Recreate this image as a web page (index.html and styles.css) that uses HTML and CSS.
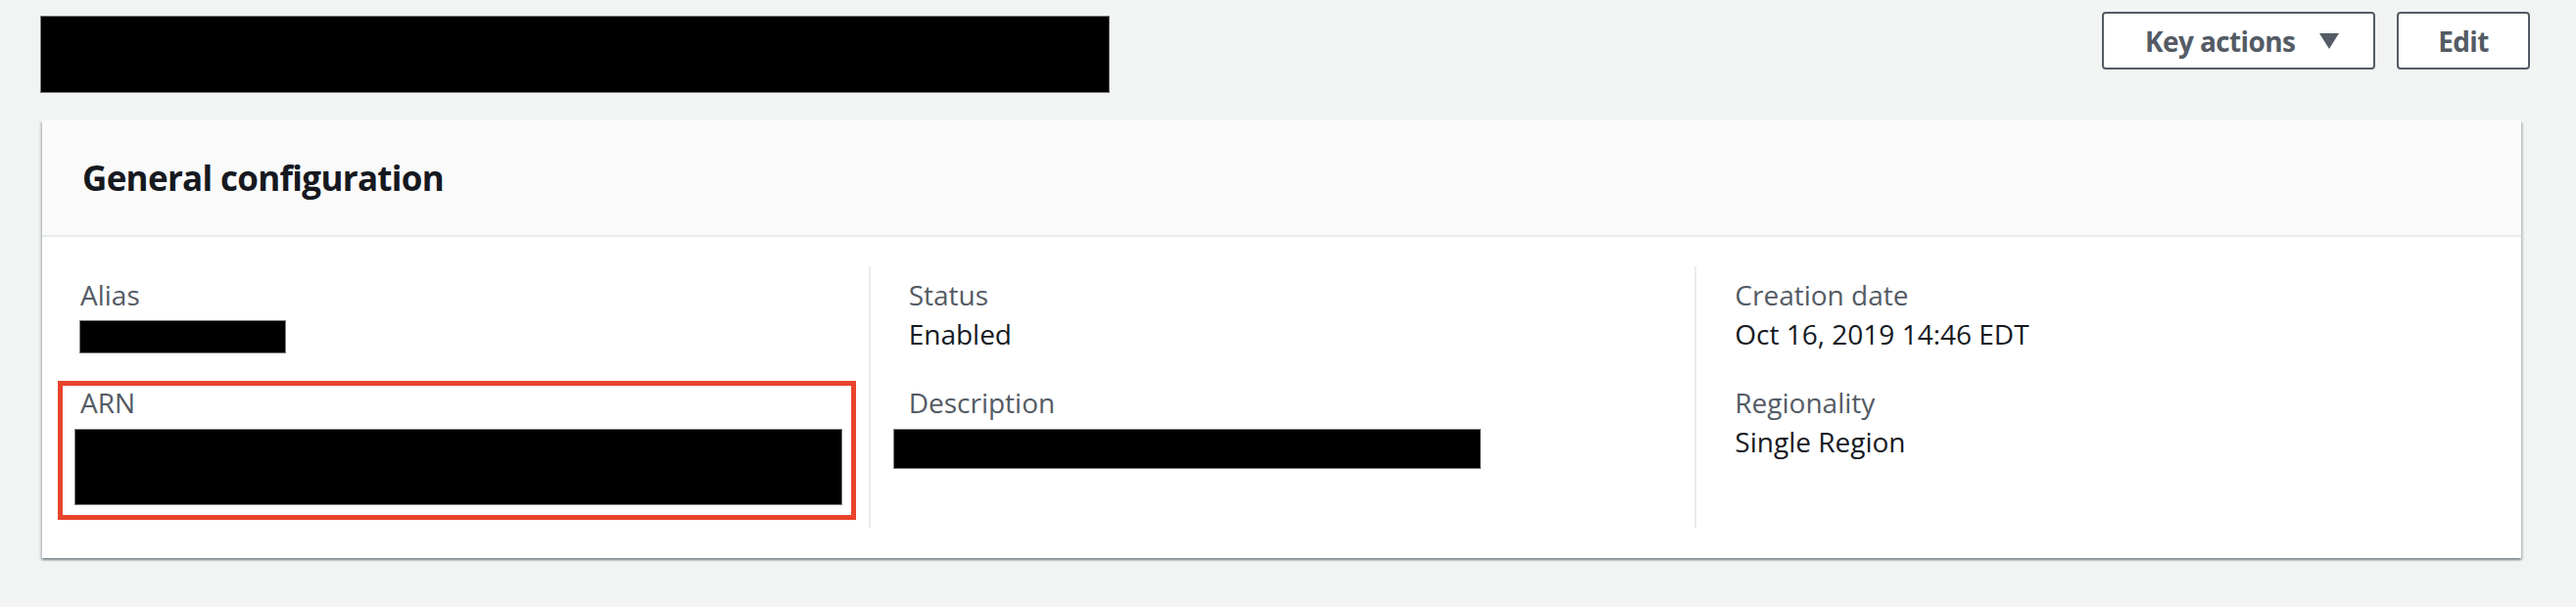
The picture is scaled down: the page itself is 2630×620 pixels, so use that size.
FILE: index.html
```html
<!DOCTYPE html>
<html lang="en">
<head>
<meta charset="utf-8">
<title>General configuration</title>
<link rel="stylesheet" href="styles.css">
</head>
<body>
<div class="page">
  <div class="top-row">
    <div class="redact redact-title"></div>
    <div class="actions">
      <button class="btn btn-dropdown" type="button">
        <span>Key actions</span>
        <svg class="caret" width="20" height="16" viewBox="0 0 20 16" aria-hidden="true"><path d="M0 0 H20 L10 16 Z" fill="#545b64"/></svg>
      </button>
      <button class="btn" type="button">Edit</button>
    </div>
  </div>

  <section class="card">
    <header class="card-header">
      <h2 class="card-title">General configuration</h2>
    </header>
    <div class="card-body">
      <div class="col">
        <div class="kv">
          <div class="kv-label">Alias</div>
          <div class="redact redact-alias"></div>
        </div>
        <div class="kv kv-arn">
          <div class="kv-label">ARN</div>
          <div class="redact redact-arn"></div>
        </div>
      </div>
      <div class="col col-divided">
        <div class="kv">
          <div class="kv-label">Status</div>
          <div class="kv-value">Enabled</div>
        </div>
        <div class="kv">
          <div class="kv-label">Description</div>
          <div class="redact redact-desc"></div>
        </div>
      </div>
      <div class="col col-divided">
        <div class="kv">
          <div class="kv-label">Creation date</div>
          <div class="kv-value">Oct 16, 2019 14:46 EDT</div>
        </div>
        <div class="kv">
          <div class="kv-label">Regionality</div>
          <div class="kv-value">Single Region</div>
        </div>
      </div>
    </div>
  </section>
</div>
</body>
</html>
```

FILE: styles.css
```css
*, *::before, *::after {
  box-sizing: border-box;
}

html, body {
  margin: 0;
  padding: 0;
  background: #f2f3f3;
}

body {
  font-family: "Open Sans", "Noto Sans", "Liberation Sans", sans-serif;
  color: #16191f;
  width: 2630px;
  height: 620px;
  overflow: hidden;
}

.page {
  padding: 0 47px 0 41px;
}

.top-row {
  display: flex;
  justify-content: space-between;
  align-items: flex-start;
}

.redact {
  background: #000;
  border: 1px solid #7d7d7d;
}

.redact-title {
  margin-top: 16px;
  width: 1092px;
  height: 79px;
}

.actions {
  display: flex;
  gap: 22px;
  margin-top: 12px;
}

.btn {
  display: flex;
  align-items: center;
  justify-content: center;
  height: 59px;
  padding: 0 41px;
  background: #fff;
  border: 2px solid #545b64;
  border-radius: 4px;
  font-family: "Open Sans", "Noto Sans", "Liberation Sans", sans-serif;
  font-weight: 700;
  font-size: 28px;
  letter-spacing: -0.6px;
  color: #545b64;
  line-height: 40px;
  width: 136px;
}

.btn-dropdown {
  width: 279px;
  padding: 0 35px 0 42px;
  justify-content: space-between;
}

.caret {
  display: block;
  margin-top: 1px;
}

.card {
  margin: 28px 9px 0 2px;
  background: #fff;
  box-shadow: 0 2px 2px 0 rgba(0, 28, 36, 0.3), 2px 2px 2px 0 rgba(0, 28, 36, 0.15), -2px 2px 2px 0 rgba(0, 28, 36, 0.15);
}

.card-header {
  height: 119px;
  display: flex;
  align-items: center;
  padding: 0 41px;
  background: #fafafa;
  border-bottom: 2px solid #eaeded;
}

.card-title {
  margin: 0;
  font-size: 35px;
  font-weight: 700;
  letter-spacing: -0.7px;
  color: #16191f;
  line-height: 48px;
}

.card-body {
  display: grid;
  grid-template-columns: repeat(3, minmax(0, 1fr));
  padding: 30px 0 31px;
}

.col {
  min-width: 0;
  padding: 9px 40px 23px 39px;
  display: flex;
  flex-direction: column;
  gap: 30px;
}

.col-divided {
  border-left: 2px solid #eaeded;
  padding-left: 39px;
}

.kv-label {
  font-size: 28px;
  line-height: 40px;
  color: #545b64;
}

.kv-value {
  font-size: 28px;
  line-height: 40px;
  color: #16191f;
}

.redact-alias {
  margin-top: 6px;
  width: 211px;
  height: 34px;
  margin-left: -1px;
}

.kv-arn {
  position: relative;
}

.kv-arn::after {
  content: "";
  position: absolute;
  left: -23px;
  top: -2px;
  width: 815px;
  height: 142px;
  border: 5px solid #e9432b;
  pointer-events: none;
}

.redact-arn {
  margin-top: 7px;
  margin-left: -6px;
  width: 784px;
  height: 78px;
  flex-shrink: 0;
}

.redact-desc {
  margin-top: 7px;
  margin-left: -16px;
  width: 600px;
  height: 41px;
}
```
